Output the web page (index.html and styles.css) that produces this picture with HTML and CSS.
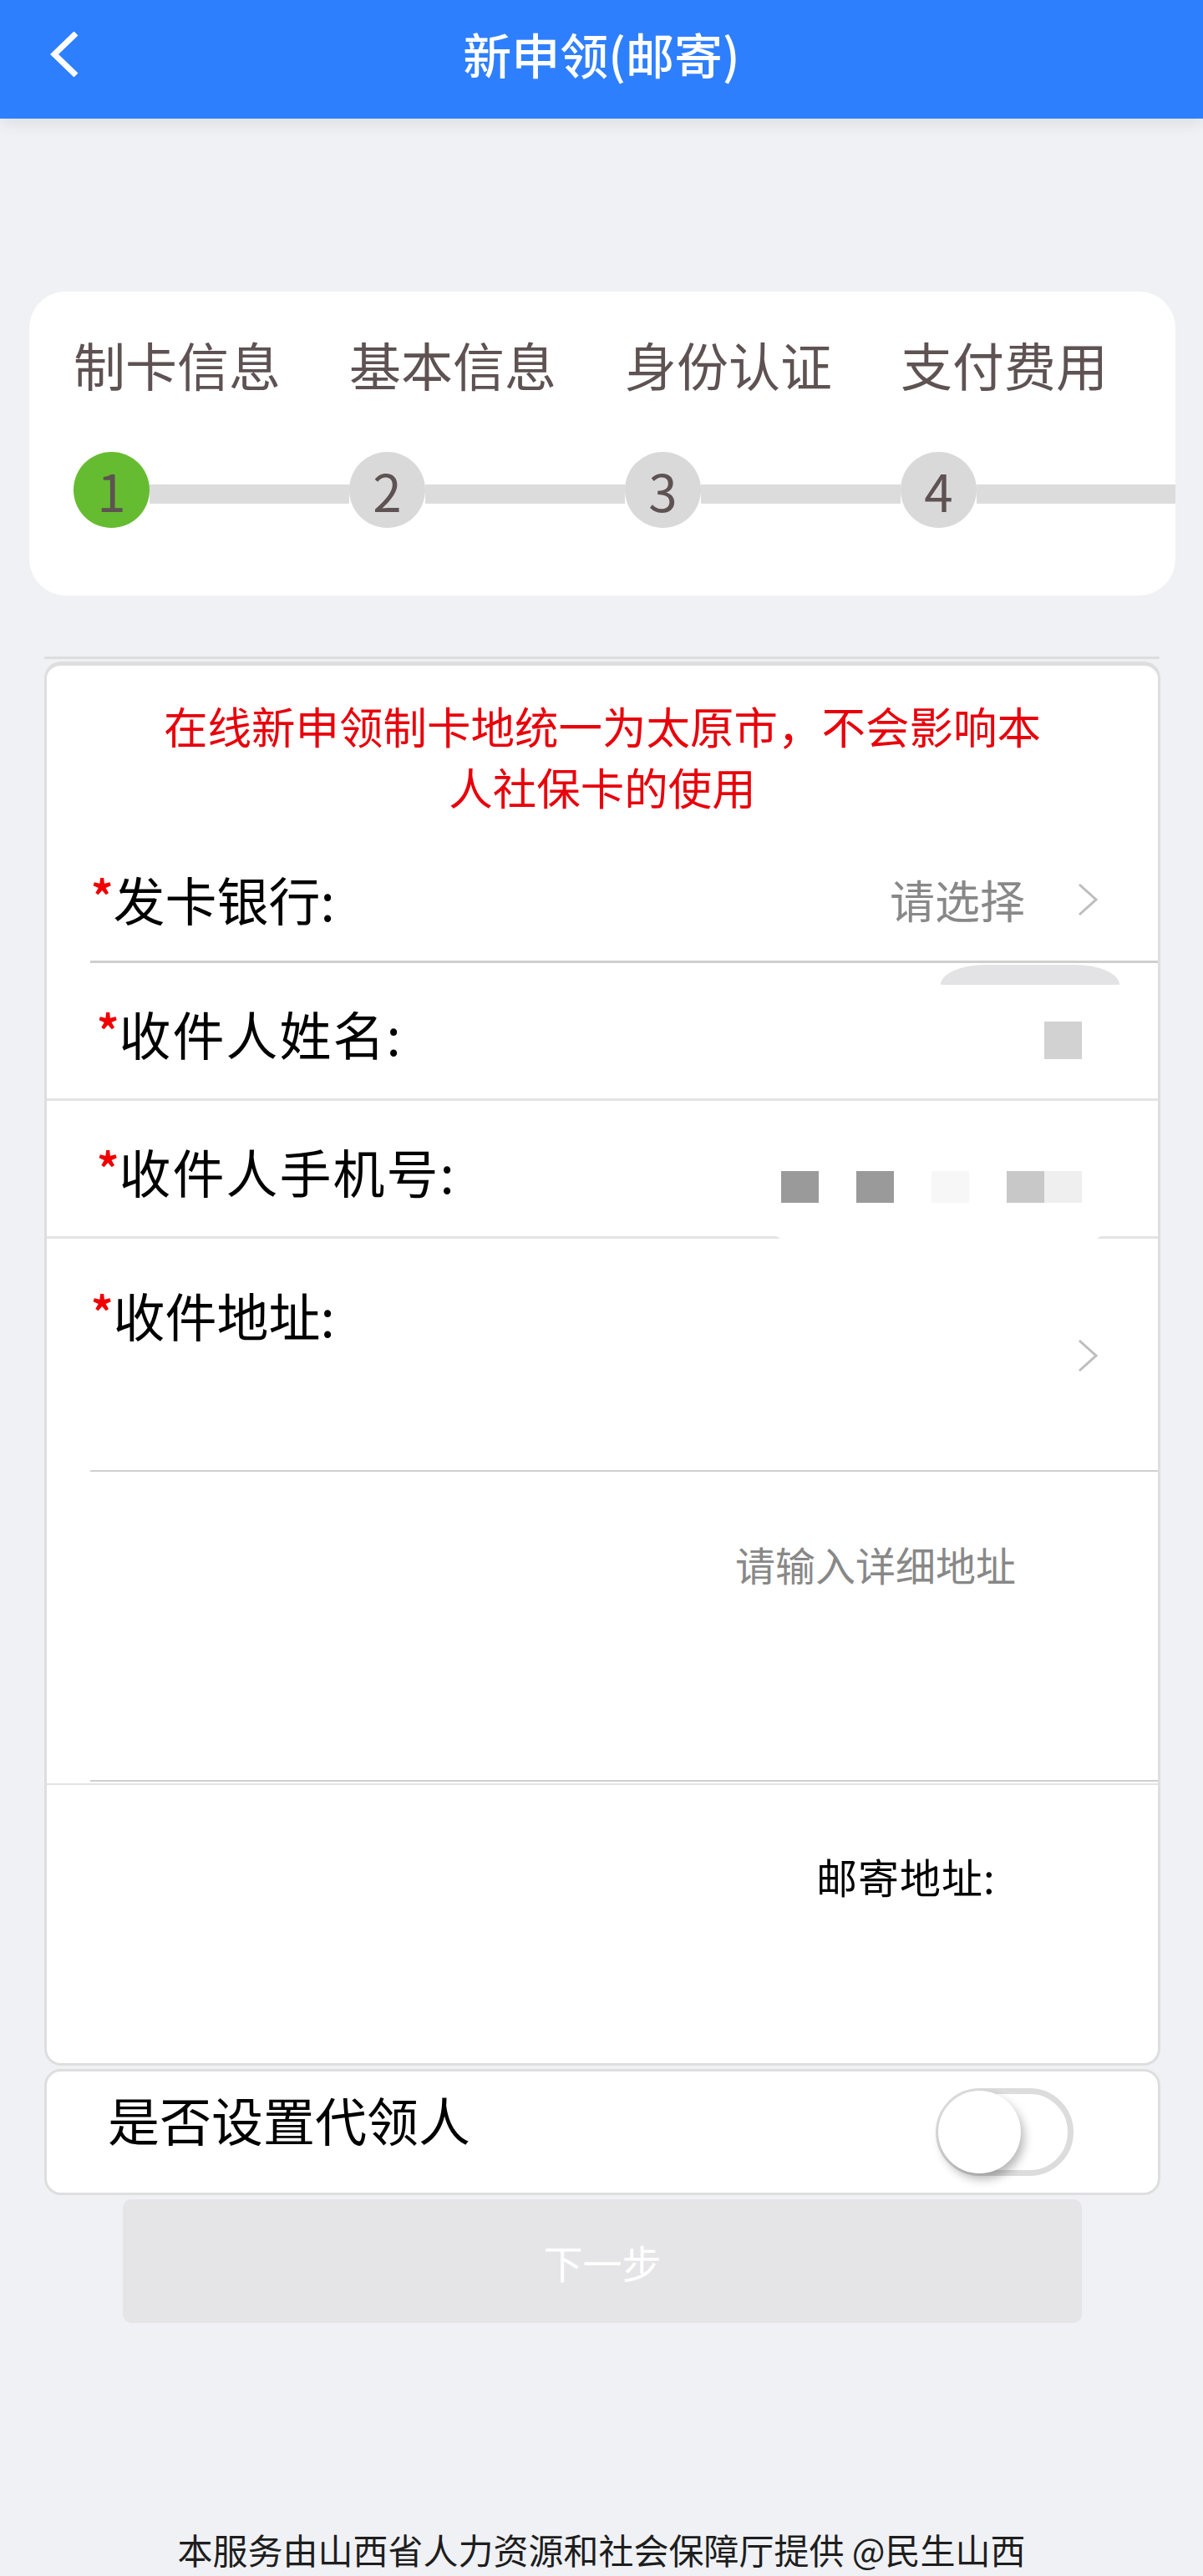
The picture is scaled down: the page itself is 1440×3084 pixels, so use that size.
FILE: index.html
```html
<!DOCTYPE html>
<html lang="zh-CN">
<head>
<meta charset="utf-8">
<title>新申领(邮寄)</title>
<link rel="stylesheet" href="styles.css">
</head>
<body>
<header class="topbar">
  <div class="back">
    <svg class="back-icon" width="34" height="54" viewBox="0 0 34 54"><polyline points="31,2 5,27 31,52" fill="none" stroke="#ffffff" stroke-width="7" stroke-linejoin="miter"/></svg>
  </div>
  <h1 class="title">新申领(邮寄)</h1>
  <div class="spacer"></div>
</header>

<section class="steps-card">
  <div class="steps">
    <div class="step active">
      <div class="step-label">制卡信息</div>
      <div class="step-track"><span class="dot">1</span><span class="bar"></span></div>
    </div>
    <div class="step">
      <div class="step-label">基本信息</div>
      <div class="step-track"><span class="dot">2</span><span class="bar"></span></div>
    </div>
    <div class="step">
      <div class="step-label">身份认证</div>
      <div class="step-track"><span class="dot">3</span><span class="bar"></span></div>
    </div>
    <div class="step">
      <div class="step-label">支付费用</div>
      <div class="step-track"><span class="dot">4</span><span class="bar"></span></div>
    </div>
  </div>
</section>

<div class="sep"></div>

<section class="form-card">
  <p class="notice">在线新申领制卡地统一为太原市，不会影响本人社保卡的使用</p>

  <div class="row row-bank">
    <div class="label"><span class="req">*</span>发卡银行:</div>
    <div class="picker">
      <span class="placeholder">请选择</span>
      <svg class="chev" width="26" height="40" viewBox="0 0 26 40"><polyline points="3,2 23,20 3,38" fill="none" stroke="#bdbdbd" stroke-width="3"/></svg>
    </div>
  </div>
  <div class="line inset"></div>

  <div class="row row-mid row-name">
    <span class="blur-cap"></span>
    <div class="label"><span class="req">*</span>收件人姓名:</div>
    <div class="mask mask-name"><span class="px c2"></span></div>
  </div>
  <div class="line full"></div>

  <div class="row row-mid row-phone">
    <div class="label"><span class="req">*</span>收件人手机号:</div>
    <div class="mask mask-phone">
      <span class="px c1"></span><span class="px"></span><span class="px c1"></span><span class="px"></span><span class="px c4"></span><span class="px"></span><span class="px c3"></span><span class="px c5"></span>
    </div>
    <span class="blur-foot"></span>
  </div>
  <div class="line full"></div>

  <div class="row row-addr">
    <div class="label"><span class="req">*</span>收件地址:</div>
    <svg class="chev addr-chev" width="26" height="40" viewBox="0 0 26 40"><polyline points="3,2 23,20 3,38" fill="none" stroke="#bdbdbd" stroke-width="3"/></svg>
  </div>
  <div class="line inset thin"></div>

  <div class="detail">
    <span class="detail-ph">请输入详细地址</span>
  </div>
  <div class="line inset thin"></div>
  <div class="line full thin gapped"></div>

  <div class="mail">
    <span class="mail-label">邮寄地址:</span>
  </div>
</section>

<section class="agent-card">
  <div class="agent-label">是否设置代领人</div>
  <div class="switch"><span class="knob"></span></div>
</section>

<button class="next" type="button">下一步</button>

<footer class="footer">本服务由山西省人力资源和社会保障厅提供 @民生山西</footer>
</body>
</html>
```

FILE: styles.css
```css
* { box-sizing: border-box; }

html, body {
  margin: 0;
  padding: 0;
}

body {
  width: 1440px;
  min-height: 3084px;
  background: #f0f1f5;
  font-family: "Noto Sans CJK SC", "Noto Sans", sans-serif;
  color: #000;
}

/* header */
.topbar {
  height: 142px;
  background: #2e7ffe;
  display: grid;
  grid-template-columns: 1fr auto 1fr;
  align-items: start;
  box-shadow: 0 6px 18px rgba(0, 0, 0, 0.08);
}

.back {
  padding-left: 60px;
}

.back-icon {
  display: block;
  margin-top: 38px;
}

.title {
  margin: 0;
  font-size: 58px;
  font-weight: 500;
  line-height: 128px;
  color: #ffffff;
  white-space: nowrap;
}

/* steps */
.steps-card {
  margin: 207px 33px 0 35px;
  background: #ffffff;
  border-radius: 44px;
  padding: 50px 0 81px 53px;
  overflow: hidden;
}

.steps {
  display: flex;
}

.step {
  flex: none;
  width: 330px;
}

.step-label {
  font-size: 62px;
  line-height: 74px;
  color: #5e5252;
  white-space: nowrap;
}

.step-track {
  margin-top: 68px;
  display: flex;
  align-items: center;
}

.dot {
  flex: none;
  width: 91px;
  height: 91px;
  border-radius: 50%;
  background: #d9d9d9;
  color: #5e5252;
  font-size: 62px;
  line-height: 91px;
  text-align: center;
  position: relative;
  z-index: 1;
}

.step.active .dot {
  background: #66bc31;
}

.bar {
  flex: 1;
  height: 23px;
  margin-top: 10px;
  background: #dcdcdc;
}

/* separator */
.sep {
  margin: 73px 52px 0 53px;
  height: 3px;
  border-radius: 2px;
  background: #dddddd;
}

/* form card */
.form-card {
  margin: 3px 51px 0 53px;
  background: #ffffff;
  border: 3px solid #dedede;
  border-top-width: 5px;
  border-radius: 20px;
}

.notice {
  margin: 0 auto;
  padding-top: 35px;
  max-width: 1080px;
  font-size: 52.5px;
  line-height: 73px;
  color: #e8000b;
  text-align: center;
}

.row {
  display: flex;
  position: relative;
}

.label {
  font-size: 62px;
  line-height: 74px;
  color: #000;
  white-space: nowrap;
}

.row-mid .label {
  letter-spacing: 2px;
}

.req {
  color: #f00000;
  font-size: 52px;
  font-weight: 700;
  vertical-align: 10px;
  margin-right: 0;
  letter-spacing: 0;
}

.row-bank {
  height: 172px;
  padding: 56px 71px 0 53px;
  align-items: flex-start;
}

.picker {
  margin-left: auto;
  margin-top: 6px;
  height: 74px;
  display: flex;
  align-items: center;
}

.placeholder {
  font-size: 54px;
  color: #888888;
  line-height: 74px;
}

.chev {
  display: block;
  margin-left: 62px;
}

.line {
  height: 3px;
  background: #cfcfcf;
}

.line.inset {
  margin-left: 52px;
}

.line.full {
  background: #e4e4e4;
}

.line.thin {
  height: 2px;
}

.line.gapped {
  margin-top: 2px;
}

.row-mid {
  height: 162px;
  padding: 0 91px 0 60px;
  align-items: center;
}

.row-phone {
  z-index: 1;
}

.mask {
  margin-left: auto;
  display: flex;
}

.mask-name {
  margin-top: 22px;
}

.mask-phone {
  margin-top: 50px;
}

.px {
  width: 45px;
  height: 45px;
  background: #ffffff;
}

.px.c1 { background: #9a9a9a; }
.px.c2 { background: #d2d2d2; }
.px.c3 { background: #c8c8c8; }
.px.c4 { background: #f7f7f7; }
.px.c5 { background: #efefef; }

.blur-cap {
  position: absolute;
  left: 1070px;
  top: 2px;
  width: 214px;
  height: 24px;
  background: #e3e3e5;
  border-radius: 54px 54px 0 0 / 24px 24px 0 0;
}

.blur-foot {
  position: absolute;
  left: 854px;
  top: 122px;
  width: 427px;
  height: 46px;
  background: #ffffff;
  border-radius: 0 0 40px 40px;
}

.row-addr {
  height: 277px;
  padding: 49px 71px 0 53px;
  align-items: flex-start;
}

.addr-chev {
  margin-left: auto;
  align-self: center;
  margin-top: -46px;
}

.detail {
  height: 369px;
  padding: 77px 0 0 824px;
}

.detail-ph {
  font-size: 48px;
  line-height: 67px;
  color: #888888;
}

.mail {
  height: 333px;
  padding: 75px 0 0 921px;
}

.mail-label {
  font-size: 49px;
  line-height: 67px;
  color: #000;
  letter-spacing: 1px;
}

/* agent */
.agent-card {
  margin: 4px 51px 0 53px;
  height: 151px;
  background: #ffffff;
  border: 3px solid #dedede;
  border-radius: 20px;
  display: flex;
  align-items: flex-start;
  padding: 20px 101px 0 73px;
}

.agent-label {
  font-size: 62px;
  line-height: 74px;
  color: #000;
}

.switch {
  margin-left: auto;
  width: 165px;
  height: 105px;
  border: 7px solid #dcdcdc;
  border-radius: 53px;
  background: #ffffff;
  position: relative;
}

.knob {
  position: absolute;
  left: -4px;
  top: -4px;
  width: 99px;
  height: 99px;
  border-radius: 50%;
  background: #ffffff;
  box-shadow: 4px 7px 12px rgba(0, 0, 0, 0.28);
}

/* next button */
.next {
  display: block;
  margin: 5px 0 0 147px;
  width: 1148px;
  height: 148px;
  border: none;
  border-radius: 10px;
  background: #e5e5e8;
  color: #ffffff;
  font-family: "Noto Sans CJK SC", "Noto Sans", sans-serif;
  font-size: 47px;
  padding: 0;
}

.footer {
  margin-top: 241px;
  text-align: center;
  font-size: 42px;
  line-height: 59px;
  color: #1e1e1e;
}
```
